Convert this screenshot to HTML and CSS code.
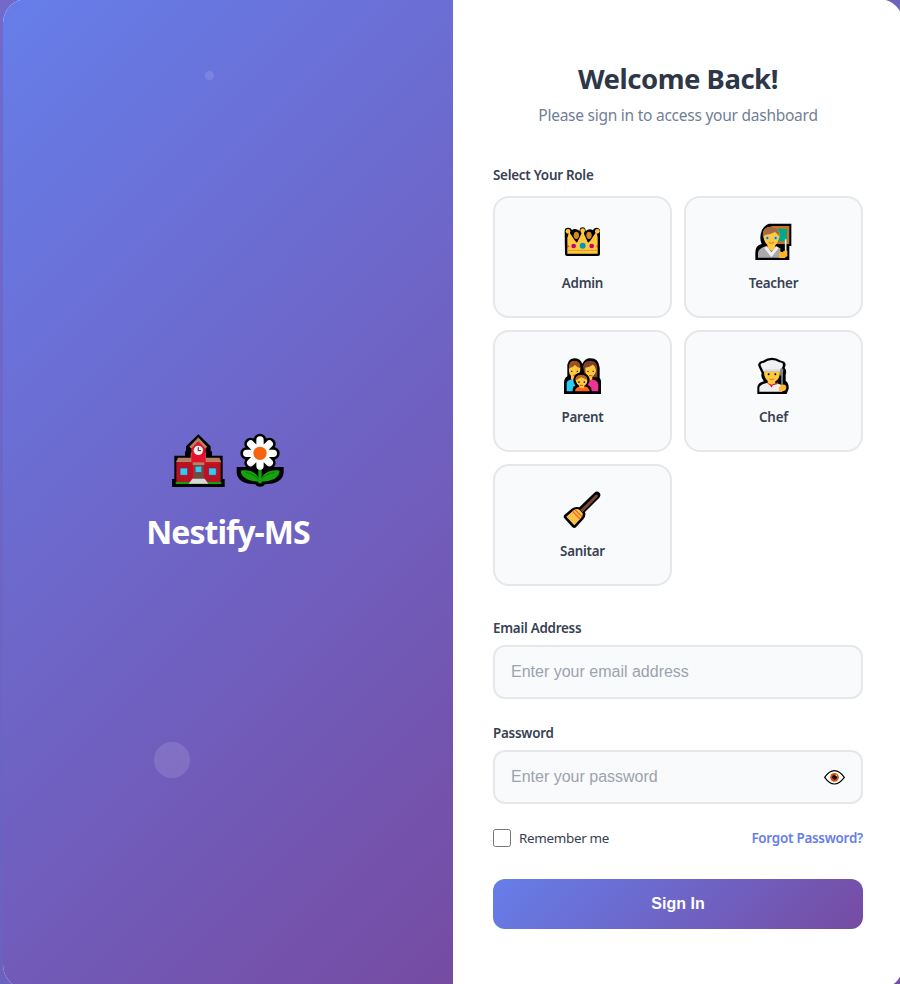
FILE: index.html
```html
<!DOCTYPE html>
<html lang="en">
<head>
<meta charset="utf-8">
<title>Nestify-MS</title>
<link rel="stylesheet" href="styles.css">
</head>
<body>
<main class="card">
  <section class="brand">
    <span class="bubble bubble-small"></span>
    <span class="bubble bubble-large"></span>
    <svg class="brand-art" viewBox="36 24 336 165" aria-hidden="true">
      <path d="M36 186V162H43V92H75V79H78V64L115 28L152 64V79H156V92H188V162H194V186Z" fill="#000"/>
      <path d="M49 109H182V171H49Z" fill="#b81325"/>
      <path d="M54 98H92V85L115 60L138 85V98H178L184 111H48Z" fill="#b58265"/>
      <path d="M94 68L115 47L137 68V112H182V115H131V164H99V115H94Z" fill="#e5122b"/>
      <path d="M91 68L115 43L139 68" fill="none" stroke="#b58265" stroke-width="8"/>
      <circle cx="115" cy="76" r="14" fill="#f4f4f4"/><path d="M115 67V77H123" fill="none" stroke="#555" stroke-width="4"/>
      <path d="M60 129H83V151H60ZM146 129H169V151H146Z" fill="#35caf5" stroke="#931323" stroke-width="2"/>
      <path d="M102 113H130V162H102Z" fill="#685044"/><path d="M98 112H133V120H98Z" fill="#b58265"/>
      <path d="M107 125H124V141H107Z" fill="#35caf5"/>
      <path d="M47 171H184V177H47Z" fill="#13a10e"/><path d="M97 161H134L145 176H86Z" fill="#d8d8dc"/>
      <g stroke="#000" stroke-width="38" stroke-linecap="round"><path d="M300 45V123M260 85H340M272 57L328 113M328 57L272 113"/></g>
      <path d="M230 126H371V142C370 166 348 178 315 178C310 188 291 188 286 178C252 178 230 165 230 142Z" fill="#000"/>
      <path d="M242 137C270 132 292 143 300 169C309 143 331 132 359 137C358 158 336 170 300 170C265 169 244 158 242 137Z" fill="#16a10e"/>
      <path d="M257 142Q287 148 299 168Q312 148 343 142" fill="none" stroke="#0b7a08" stroke-width="3"/>
      <path d="M300 132V175" stroke="#16a10e" stroke-width="10"/>
      <g stroke="#fff" stroke-width="22" stroke-linecap="round"><path d="M300 45V123M260 85H340M272 57L328 113M328 57L272 113"/></g>
      <circle cx="300" cy="85" r="20" fill="#f7630c"/>
    </svg>
    <h1 class="brand-name">Nestify-MS</h1>
  </section>
  <section class="panel">
    <h2 class="title">Welcome Back!</h2>
    <p class="subtitle">Please sign in to access your dashboard</p>
    <form class="form">
      <div class="label role-title">Select Your Role</div>
      <div class="roles">
        <div class="role">
          <svg viewBox="0 0 165 150" aria-hidden="true">
            <path d="M29 48Q29 38 39 38Q48 38 51 45Q61 38 74 48Q73 37 83 37Q92 38 92 48Q103 39 114 46Q116 38 126 38Q136 39 135 50V117Q135 123 129 123H36Q30 123 30 117Z"/>
            <g fill="#d18b20"><ellipse cx="64" cy="61" rx="8" ry="11"/><ellipse cx="102" cy="61" rx="8" ry="11"/></g>
            <path d="M38 67L42 50L60 77L66 83L79 57V51H87V57L99 83L106 77L124 50L128 67V116H37V67Z" fill="#ffc83d"/>
            <g fill="#ffc83d"><circle cx="39" cy="49" r="7"/><circle cx="83" cy="47" r="7"/><circle cx="127" cy="49" r="7"/></g>
            <path d="M38 106H128" stroke="#e2952c" stroke-width="3"/>
            <circle cx="56" cy="93" r="7" fill="#bf0077"/><circle cx="83" cy="92" r="9" fill="#0099bc"/><circle cx="110" cy="93" r="7" fill="#bf0077"/><path d="M37 88L42 94L37 100ZM128 88L124 94L128 100Z" fill="#e81224"/>
          </svg>
          <span class="label">Admin</span>
        </div>
        <div class="role">
          <svg viewBox="3 0 165 150" aria-hidden="true">
            <path d="M72 26H139V93H133V135H31V112Q31 91 50 87Q43 72 48 54Q53 33 72 26Z"/>
            <path d="M79 33H133V87H91Z" fill="#c77724"/><path d="M92 41H126V79H92Z" fill="#00a88d"/>
            <path d="M55 66Q50 37 77 35Q106 37 104 65L99 78Q95 88 91 90V100L79 109L67 99V89Q60 86 55 66Z" fill="#ffc83d"/>
            <path d="M54 66Q49 36 78 35Q105 36 104 66Q97 56 90 51Q73 60 61 59Z" fill="#a56a43"/>
            <circle cx="67" cy="69" r="6" fill="#8bcbe3"/><circle cx="92" cy="69" r="6" fill="#8bcbe3"/><circle cx="67" cy="69" r="3" fill="#38556e"/><circle cx="92" cy="69" r="3" fill="#38556e"/>
            <path d="M71 82Q79 88 87 82" fill="none" stroke="#c4762d" stroke-width="3"/>
            <path d="M39 128V114Q40 99 64 94L79 110L93 94L106 100V128Z" fill="#aaa"/><path d="M65 94L79 112L94 94L101 99L79 127L57 98Z" fill="#eee"/>
            <path d="M122 73V113" stroke="#e9edf0" stroke-width="5"/><path d="M103 109L112 112Q118 104 127 107V123L119 129H102Z" fill="#ffb62c"/>
          </svg>
          <span class="label">Teacher</span>
        </div>
        <div class="role role-low">
          <svg viewBox="0 0 165 150" aria-hidden="true">
            <path d="M27 132V97Q28 84 37 79V44Q42 25 58 25Q75 25 82 41Q91 24 107 25Q131 25 134 53V84Q139 88 138 103V132Z"/>
            <path d="M35 124V99Q38 88 55 88L71 92V124Z" fill="#28cdf6"/><path d="M93 91Q125 83 130 103V124H94Z" fill="#ed3497"/>
            <path d="M91 82L84 50Q86 32 107 32Q128 34 127 57V82Z" fill="#81402b"/>
            <path d="M43 51Q43 33 58 33Q76 34 76 55Q76 72 66 78V87Q58 96 48 87V78Q39 70 43 51ZM91 53Q104 51 113 44Q121 48 123 61Q122 73 112 80V88Q103 95 98 86V79Q90 73 91 53Z" fill="#ffc83d"/>
            <path d="M42 55Q41 33 58 32Q76 33 76 54Q70 55 60 45Q53 53 42 55Z" fill="#9d4f24"/>
            <path d="M50 62V66M67 62V66M99 62V66M115 62V66" stroke="#302d29" stroke-width="4"/><path d="M55 76H64M102 77H112" stroke="#e04c35" stroke-width="3"/>
            <path d="M53 132V117Q54 108 61 107Q51 93 58 79Q66 66 81 68Q101 70 104 88Q105 97 98 105Q111 108 111 132Z"/>
            <path d="M60 124Q60 112 77 109Q102 106 104 124Z" fill="#ff641e"/><path d="M62 92Q60 78 76 76Q96 75 97 92Q97 102 87 108V113Q80 117 73 112V107Q65 103 62 92Z" fill="#ffc83d"/>
            <path d="M62 91Q60 75 79 75Q96 75 97 90L79 82Z" fill="#b4631f"/><path d="M72 94V99M88 94V99" stroke="#302d29" stroke-width="4"/><path d="M75 106H84" stroke="#e04c35" stroke-width="3"/>
          </svg>
          <span class="label">Parent</span>
        </div>
        <div class="role role-low">
          <svg viewBox="3 0 165 150" aria-hidden="true">
            <path d="M37 132V111Q39 98 57 94Q46 83 50 70L40 48Q37 35 54 32Q80 15 108 32Q125 35 121 48L119 54Q126 60 122 74V92Q132 99 131 116L125 132Z"/>
            <path d="M43 125V113Q45 103 65 99H94L112 106V125Z" fill="#eee"/>
            <path d="M57 65H105Q105 86 91 94V101L79 109L68 99V92Q57 84 57 65Z" fill="#ffc83d"/>
            <path d="M48 49Q43 39 57 38Q79 23 103 37Q117 38 113 49L106 65H56Z" fill="#f1f1f1"/><path d="M58 60H104" stroke="#ccc" stroke-width="3"/>
            <circle cx="71" cy="73" r="3"/><circle cx="91" cy="73" r="3"/><path d="M74 87Q80 90 87 87" fill="none" stroke="#d37425" stroke-width="3"/>
            <path d="M63 97L80 104L99 96L96 103L83 106L80 113L75 106Z" fill="#e81224"/>
            <path d="M106 56Q112 53 115 59L113 77H107Q102 68 106 56Z" fill="#858585"/><path d="M111 73V107" stroke="#858585" stroke-width="5"/><path d="M101 113L109 105Q122 101 124 111Q124 124 111 124H102Z" fill="#ffb92e"/>
          </svg>
          <span class="label">Chef</span>
        </div>
        <div class="role">
          <svg viewBox="0 0 165 150" aria-hidden="true">
            <path d="M28 96L50 77Q60 69 73 73L118 29Q127 22 134 30Q139 37 133 44L90 87Q94 99 85 109L63 133Q57 138 51 131L28 106Q24 101 28 96Z"/>
            <path d="M76 81L122 35Q130 33 128 41L83 88Z" fill="#774434"/>
            <path d="M34 101L56 82Q66 74 74 81L82 90Q86 97 78 105L58 127Z" fill="#ffc64e"/>
            <path d="M40 101L60 121M47 95L67 115M39 106L56 88M47 114L68 92M55 121L76 99" stroke="#dda141" stroke-width="2" stroke-dasharray="3 3"/>
            <path d="M52 84L75 108M60 80L81 101" stroke="#ee6c23" stroke-width="4"/>
          </svg>
          <span class="label">Sanitar</span>
        </div>
      </div>
      <label class="label" for="email">Email Address</label>
      <input class="input" id="email" type="email" placeholder="Enter your email address">
      <label class="label" for="password">Password</label>
      <div class="password">
        <input class="input" id="password" type="password" placeholder="Enter your password">
        <svg class="eye" viewBox="0 0 63 45" aria-hidden="true">
          <path d="M2 22Q31-18 61 22Q31 62 2 22Z" fill="#fff" stroke="#000" stroke-width="3.5"/>
          <circle cx="31.5" cy="22" r="13" fill="#da4d0b"/><circle cx="31.5" cy="22" r="7"/>
          <circle cx="37" cy="16" r="2.5" fill="#ffd7bd"/>
        </svg>
      </div>
      <div class="options">
        <label class="remember"><input class="check" type="checkbox"><span class="remember-text">Remember me</span></label>
        <a class="forgot">Forgot Password?</a>
      </div>
      <button class="submit" type="button">Sign In</button>
    </form>
  </section>
</main>
</body>
</html>
```
FILE: styles.css
```css
* { box-sizing: border-box; }
body {
  margin: 0;
  height: 984px;
  overflow: hidden;
  background: linear-gradient(180deg, #6d65bd, #704fa6);
  font-family: "Segoe UI", "Noto Sans", sans-serif;
  color: #2d3748;
}
body::before {
  content: "";
  position: absolute;
  z-index: -1;
  left: 0;
  top: 0;
  width: 24px;
  height: 984px;
  background: linear-gradient(180deg, #726acb, #6a62bf);
}
.card {
  display: flex;
  width: 900px;
  height: 990px;
  margin: -1px 0 0 3px;
  border-radius: 24px;
  overflow: hidden;
  background: #fff;
}
.brand {
  position: relative;
  width: 450px;
  display: flex;
  flex-direction: column;
  align-items: center;
  padding-top: 434px;
  background: linear-gradient(135deg, #667eea 0%, #764ba2 100%);
}
.brand-art { display: block; width: 112px; height: 55px; }
.brand-name {
  margin: 20px 0 0;
  font-size: 32px;
  line-height: 48px;
  font-weight: 700;
  letter-spacing: -1px;
  color: #fff;
}
.bubble { position: absolute; border-radius: 50%; background: rgba(255, 255, 255, 0.12); }
.bubble-small { width: 9px; height: 9px; left: 202px; top: 71.5px; }
.bubble-large { width: 36px; height: 36px; left: 151px; top: 742.5px; }
.panel { width: 450px; padding: 57px 40px 0; }
.title {
  margin: 0;
  font-size: 27.5px;
  line-height: 46px;
  font-weight: 700;
  letter-spacing: -0.48px;
  text-align: center;
  white-space: nowrap;
}
.subtitle {
  margin: 1px 0 0;
  font-size: 15.5px;
  line-height: 24px;
  letter-spacing: -0.25px;
  color: #718096;
  text-align: center;
  white-space: nowrap;
}
.form { display: flex; flex-direction: column; margin-top: 38px; }
.label { font-size: 13.4px; line-height: 20px; font-weight: 600; letter-spacing: -0.25px; color: #374151; }
.roles { display: grid; grid-template-columns: 179px 179px; grid-auto-rows: 122px; gap: 12px; margin: 11px 0 32px; }
.role {
  display: flex;
  flex-direction: column;
  align-items: center;
  padding-top: 17px;
  border: 2px solid #e5e7eb;
  border-radius: 16px;
  background: #f9fafc;
}
.role svg { display: block; width: 55px; height: 50px; margin-bottom: 8px; }
.role-low { padding-top: 18px; }
.role-low svg { margin-bottom: 7px; }
.input {
  display: block;
  width: 370px;
  height: 54px;
  margin: 7px 0 24px;
  padding: 0 16px;
  border: 2px solid #e5e7eb;
  border-radius: 12px;
  background: #f9fafc;
  font: 16px "Liberation Sans", sans-serif;
}
.input::placeholder { color: #9ca3af; opacity: 1; }
.password { position: relative; }
.eye { position: absolute; width: 21px; height: 15px; left: 331px; top: 27px; }
.options { display: flex; justify-content: space-between; align-items: center; height: 20px; font-size: 13.4px; line-height: 20px; }
.remember { display: flex; align-items: center; gap: 8px; letter-spacing: -0.3px; color: #374151; }
.check { width: 18px; height: 18px; margin: 0; }
.forgot { font-weight: 600; letter-spacing: -0.24px; color: #667eea; }
.submit {
  height: 50px;
  margin-top: 31px;
  border: 0;
  border-radius: 12px;
  background: linear-gradient(135deg, #667eea, #764ba2);
  color: #fff;
  font: 700 16px "Liberation Sans", sans-serif;
}
```
